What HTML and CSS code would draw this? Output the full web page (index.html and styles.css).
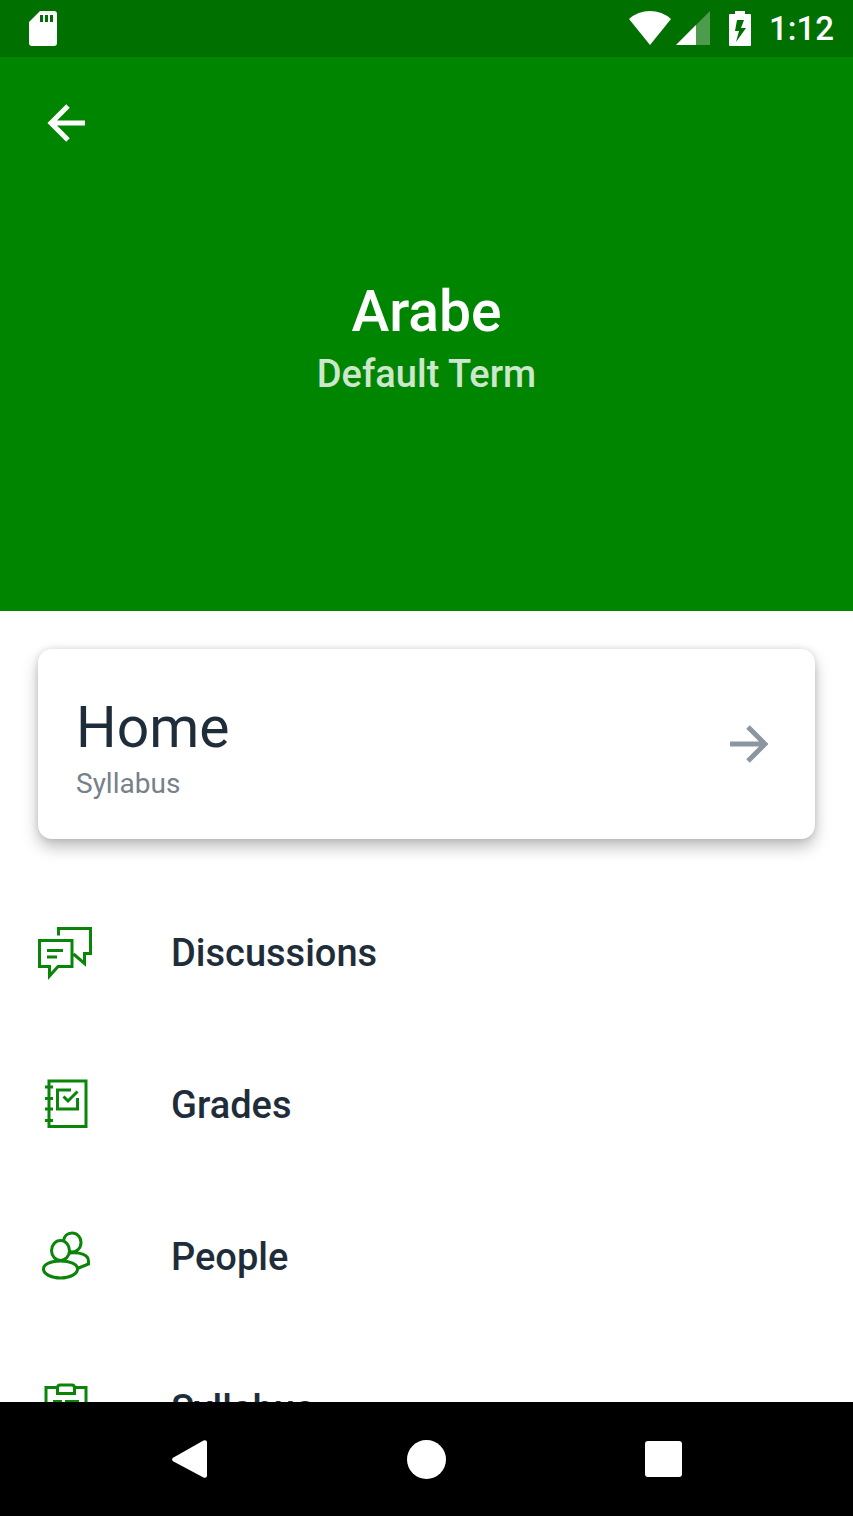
FILE: index.html
```html
<!DOCTYPE html>
<html lang="en">
<head>
<meta charset="utf-8">
<meta name="viewport" content="width=device-width, initial-scale=1">
<title>Arabe</title>
<link rel="stylesheet" href="styles.css">
</head>
<body class="screen">
<div class="status">
  <svg class="status-card" width="28" height="35" viewBox="0 0 28 35" aria-hidden="true"><path fill="#fff" fill-rule="evenodd" d="M11 0H25Q28 0 28 3V32Q28 35 25 35H3Q0 35 0 32V11ZM11 4V11H14V4ZM16 4V11H19V4ZM21 4V11H24V4Z"/></svg>
  <svg class="status-wifi" width="42" height="35" viewBox="0 0 42 35" aria-hidden="true"><path fill="#fff" d="M0 8Q9 0 21 0T42 8L21 34Z"/></svg>
  <svg class="status-signal" width="34" height="35" viewBox="0 0 34 35" aria-hidden="true"><path fill="#fff" fill-opacity=".3" d="M34 0V34H0Z"/><path fill="#fff" d="M20 14V34H0Z"/></svg>
  <svg class="status-battery" width="22" height="35" viewBox="0 0 22 35" aria-hidden="true"><path fill="#fff" fill-rule="evenodd" d="M6 0H16V3H21Q22 3 22 4V34Q22 35 21 35H1Q0 35 0 34V4Q0 3 1 3H6ZM8 9L6 20H10L7 31L17 17H12L15 9Z"/></svg>
  <span class="clock">1:12</span>
</div>
<header class="hero">
  <div class="toolbar">
    <button class="back" type="button" aria-label="Back">
      <svg width="38" height="38" viewBox="0 0 38 38" fill="none" stroke="#fff" stroke-width="5" aria-hidden="true"><path d="M38 19H4M21 2L4 19L21 36"/></svg>
    </button>
  </div>
  <h1 class="course">Arabe</h1>
  <p class="term">Default Term</p>
</header>
<main class="content">
  <a class="home" href="#home">
    <span class="home-text">
      <span class="home-title">Home</span>
      <span class="home-sub">Syllabus</span>
    </span>
    <svg width="38" height="38" viewBox="0 0 38 38" fill="none" stroke="#8b969e" stroke-width="5" aria-hidden="true"><path d="M0 19H35M18 2L35 19L18 36"/></svg>
  </a>
  <nav class="tabs" aria-label="Course">
    <a class="tab" href="#discussions">
      <svg class="tab-icon" viewBox="0 1 56 56" aria-hidden="true"><path d="M20.5 11.5V4.5H52.5V29.5H46.5V39.5L35.5 30M1.5 16.5H34V42.5H20L11.5 52V42.5H1.5ZM9 26.5H25M9 33H19"/></svg>
      <span>Discussions</span>
    </a>
    <a class="tab" href="#grades">
      <svg class="tab-icon" viewBox="0 1 56 56" aria-hidden="true"><path d="M11 5H48V50.5H11ZM7 11H15M7 22.500H15M7 33H15M7 44.500H15M33 14H19.500V33H39.500V22M25.500 20.500L30 25L39.500 15.500"/></svg>
      <span>Grades</span>
    </a>
    <a class="tab" href="#people">
      <svg class="tab-icon" viewBox="0 1 56 56" aria-hidden="true"><ellipse cx="22.500" cy="22.500" rx="9" ry="10"/><path d="M5.500 41C5.500 36 13 33 22.500 33S39.500 36 39.500 41S32 50 22.500 50S5.500 46 5.500 41ZM25.500 13C26 8 29.500 5 34 5C39 5 43 9 43 14.500C43 20 39 24 34 24L31 23.500M31.500 25C43 24 50.500 27 50.500 33V36L39.500 40.500"/></svg>
      <span>People</span>
    </a>
    <a class="tab" href="#syllabus">
      <svg class="tab-icon" viewBox="0 1 56 56" aria-hidden="true"><path d="M19.500 7.500H8V52H48V7.500H36.500M22 5H34Q36.500 5 36.500 8V13.500H19.500V8Q19.500 5 22 5ZM15 21.500H24M27 21.500H41M15 32H24M27 32H41"/></svg>
      <span>Syllabus</span>
    </a>
  </nav>
</main>
<div class="system-nav">
  <button class="key" type="button" aria-label="System back"><svg width="35" height="38" viewBox="0 0 35 38" aria-hidden="true"><path fill="#fff" d="M1.500 17.500L31.500 .5Q35 -.5 35 2.500V35.500Q35 38.500 31.500 37.500L1.500 21.500Q-1.500 19.500 1.500 17.500Z"/></svg></button>
  <button class="key" type="button" aria-label="System home"><svg width="39" height="39" viewBox="0 0 39 39" aria-hidden="true"><circle fill="#fff" cx="19.500" cy="19.500" r="19.500"/></svg></button>
  <button class="key" type="button" aria-label="Recent apps"><svg width="37" height="36" viewBox="0 0 37 36" aria-hidden="true"><rect fill="#fff" width="37" height="36" rx="3"/></svg></button>
</div>
</body>
</html>
```
FILE: styles.css
```css
* {
  box-sizing: border-box;
}

.screen {
  margin: 0;
  height: 100vh;
  display: flex;
  flex-direction: column;
  overflow: hidden;
  background: #fff;
  color: #1f2d3a;
  font-family: Roboto, "Liberation Sans", sans-serif;
}

button {
  margin: 0;
  padding: 0;
  border: 0;
  background: none;
  cursor: pointer;
}

svg {
  display: block;
  flex: none;
}

a {
  color: inherit;
  text-decoration: none;
}

.status {
  flex: none;
  display: flex;
  align-items: center;
  height: 57px;
  padding: 0 19px 0 29px;
  background: #007000;
  color: #fff;
}

.status-card {
  margin-right: auto;
}

.status-signal {
  margin-left: 5px;
}

.status-battery {
  margin: 0 18px 0 19px;
}

.clock {
  font-size: 33px;
  font-weight: 500;
  line-height: 40px;
}

.hero {
  flex: none;
  padding-bottom: 214px;
  background: #008500;
  color: #fff;
  text-align: center;
}

.toolbar {
  display: flex;
  align-items: center;
  height: 132px;
  padding: 0 28px;
}

.back {
  padding: 19px;
}

.course {
  margin: 89px 0 0;
  font-size: 57px;
  font-weight: 500;
  line-height: 68px;
}

.term {
  margin: 6px 0 0;
  color: #cce7cc;
  font-size: 38px;
  font-weight: 500;
  line-height: 45px;
}

.content {
  flex: 1;
  min-height: 0;
  overflow: hidden;
  padding: 38px 0;
}

.home {
  display: flex;
  align-items: center;
  justify-content: space-between;
  margin: 0 38px;
  padding: 39px 47px 39px 38px;
  border-radius: 14px;
  box-shadow: 0 8px 16px rgba(0, 0, 0, 0.26), 0 0 6px rgba(0, 0, 0, 0.12);
}

.home-text {
  display: flex;
  flex-direction: column;
}

.home-title {
  font-size: 57px;
  line-height: 80px;
}

.home-sub {
  color: #76818a;
  font-size: 28px;
  line-height: 32px;
}

.tabs {
  margin-top: 38px;
}

.tab {
  display: flex;
  align-items: center;
  gap: 77px;
  height: 152px;
  padding: 0 38px;
  font-size: 38px;
  font-weight: 500;
}

.tab-icon {
  width: 56px;
  height: 56px;
  fill: none;
  stroke: #0a850a;
  stroke-width: 3;
}

.system-nav {
  flex: none;
  display: flex;
  height: 114px;
  padding: 0 71px;
  background: #000;
}

.key {
  flex: 1;
  display: flex;
  align-items: center;
  justify-content: center;
}
```
